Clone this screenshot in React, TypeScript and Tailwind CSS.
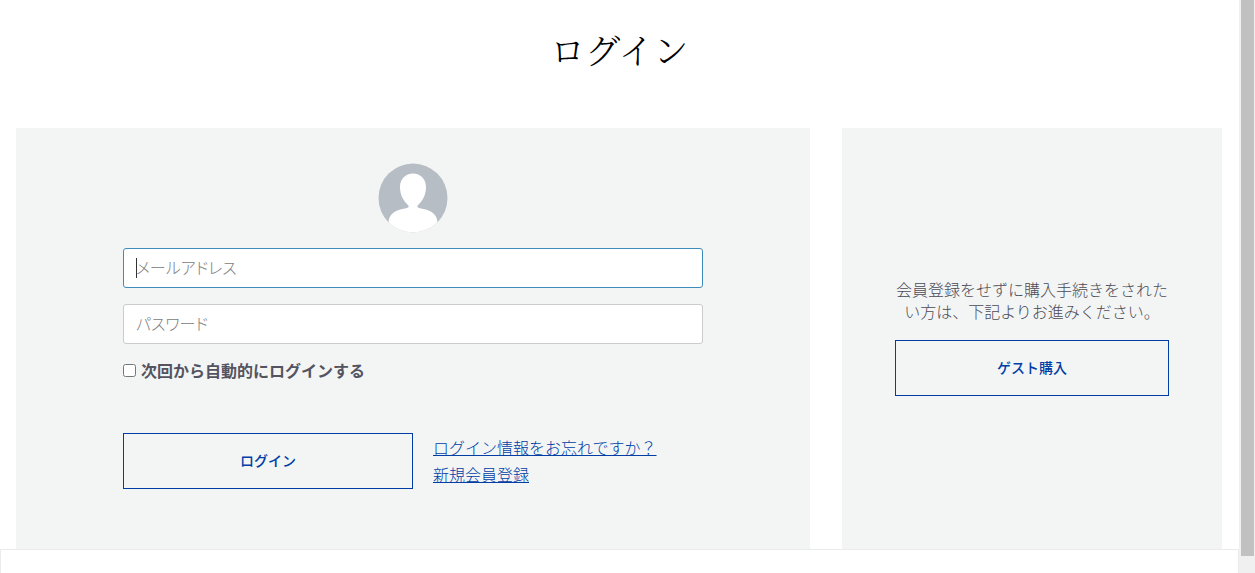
function Avatar() {
  return (
    <svg viewBox="0 0 70 70" className="mx-auto h-[70px] w-[70px]" aria-hidden="true">
      <defs>
        <clipPath id="avatar-circle">
          <circle cx="35" cy="35" r="34.5" />
        </clipPath>
      </defs>
      <circle cx="35" cy="35" r="34.5" fill="#b7bdc4" />
      <g clipPath="url(#avatar-circle)" fill="#ffffff">
        <path d="M35 10.5C27.5 10.5 22 16 22 24C22 31 24.5 36 28 40C29.8 42 30.9 42.8 30.7 43.8C30.4 45.2 28 45.3 24.5 46C16 47.5 11 52 10.5 59V70H59.5V59C59 52 54 47.5 45.5 46C42 45.3 39.600 45.2 39.3 43.8C39.1 42.8 40.2 42 42 40C45.5 36 48 31 48 24C48 16 42.5 10.5 35 10.5Z" />
      </g>
    </svg>
  )
}

function LoginCard() {
  const inputClass =
    "block h-10 w-full rounded-[3px] border bg-white px-3 pb-0.5 text-base font-light text-[#333333] outline-none [font-feature-settings:'palt'] placeholder:text-[#808080] focus:border-[#3c8dbc]"

  return (
    <section className="flex-1 bg-[#f3f5f5] px-4 pt-[35px] pb-[60px]">
      <form className="mx-auto max-w-[580px]" onSubmit={(e) => e.preventDefault()}>
        <Avatar />

        <div className="relative mt-[15px]">
          <input
            type="email"
            aria-label="メールアドレス"
            placeholder="メールアドレス"
            autoFocus
            className={`${inputClass} border-[#3c8dbc] caret-transparent`}
          />
          {/* Text cursor */}
          <span className="pointer-events-none absolute top-2.5 left-[13px] h-5 w-px bg-[#333333]" />
        </div>
        <input
          type="password"
          aria-label="パスワード"
          placeholder="パスワード"
          className={`${inputClass} mt-4 border-[#cccccc]`}
        />

        <label className="mt-3.5 flex items-center gap-[5px] text-base font-bold text-[#53545f]">
          <input type="checkbox" className="h-[13px] w-[13px]" />
          次回から自動的にログインする
        </label>

        <div className="mt-[51px] flex items-center gap-5">
          <button type="submit" className="h-14 flex-1 border border-[#003da5] pb-0.5 text-sm font-medium text-[#003da5]">
            ログイン
          </button>
          <div className="flex w-[270px] flex-col items-start text-base leading-[27px] font-light text-[#003da5]">
            <a href="#forgot" className="underline">
              ログイン情報をお忘れですか？
            </a>
            <a href="#register" className="underline">
              新規会員登録
            </a>
          </div>
        </div>
      </form>
    </section>
  )
}

function GuestCard() {
  return (
    <section className="flex w-[380px] flex-col justify-center bg-[#f3f5f5] px-[53px] pb-1">
      <p className="text-center text-base leading-[22px] font-light text-[#4a4b55]">
        会員登録をせずに購入手続きをされたい方は、下記よりお進みください。
      </p>
      <button type="button" className="mt-[18px] h-14 w-full border border-[#003da5] pb-0.5 text-sm font-medium text-[#003da5]">
        ゲスト購入
      </button>
    </section>
  )
}

export default function App() {
  return (
    <div className="flex min-h-screen bg-white font-['Noto_Sans_CJK_JP',sans-serif]">
      <div className="flex flex-1 flex-col">
        <h1 className="pt-[25px] pb-[55px] text-center font-['Noto_Serif_CJK_JP','Noto_Sans_CJK_JP',serif] text-[35px] leading-[48px] font-light text-black">
          ログイン
        </h1>
        <main className="flex gap-8 pr-[17px] pl-4">
          <LoginCard />
          <GuestCard />
        </main>
        <footer className="flex-1 border border-b-0 border-[#ebebeb] bg-white" />
      </div>

      {/* Scroll track */}
      <div className="w-4 bg-[#f0f0f0] pr-px pl-0.5">
        <div className="h-[97vh] bg-[#c1c1c1]" />
      </div>
    </div>
  )
}
